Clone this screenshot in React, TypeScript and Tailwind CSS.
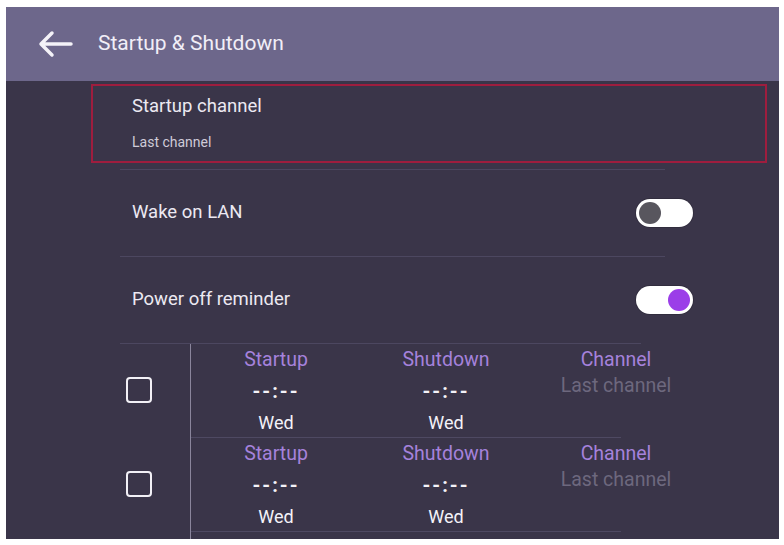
import React from "react";

const FONT = { fontFamily: "Roboto, 'Noto Sans', 'Liberation Sans', sans-serif" };

function BackArrow() {
  return (
    <svg width="36" height="28" viewBox="0 0 36 28" fill="none">
      <path
        d="M34 14H4M15 3L4 14l11 11"
        stroke="#f4f2f8"
        strokeWidth="3.5"
        strokeLinecap="round"
        strokeLinejoin="round"
      />
    </svg>
  );
}

function Toggle({ on }: { on: boolean }) {
  return (
    <div
      className={`flex h-[28px] w-[57px] items-center rounded-full bg-white px-[3px] shadow-[0_0_0_1px_rgba(0,0,0,0.15)] ${
        on ? "justify-end" : "justify-start"
      }`}
    >
      <div
        className={`h-[22px] w-[22px] rounded-full ${
          on ? "bg-[#9b3ee8]" : "bg-[#58565e]"
        }`}
      />
    </div>
  );
}

function Divider({ short }: { short?: boolean }) {
  return (
    <div
      className={`ml-[114px] h-px shrink-0 bg-[#4c4760] ${short ? "mr-[138px]" : "mr-[114px]"}`}
    />
  );
}

function SettingRow({ label, on }: { label: string; on: boolean }) {
  return (
    <div className="flex h-[86px] shrink-0 items-center justify-between pl-[126px] pr-[86px]">
      <span className="text-[18.5px] text-[#ece9f2]">{label}</span>
      <Toggle on={on} />
    </div>
  );
}

function ScheduleRow({ last }: { last?: boolean }) {
  return (
    <div className="flex h-[94px] shrink-0">
      <div className="flex w-[184px] shrink-0 items-center pl-[120px] pb-[2px]">
        <div className="h-[26px] w-[26px] rounded-[4px] border-[2.5px] border-[#f2f0f6]" />
      </div>
      <div className="flex flex-1 flex-col border-l border-[#8a859c]">
        <div className="flex h-[93px] shrink-0">
          {["Startup", "Shutdown"].map((t) => (
            <div key={t} className="flex w-[170px] shrink-0 flex-col items-center pt-[3px]">
              <span className="text-[19.5px] leading-[26px] text-[#a582dc]">{t}</span>
              <span className="mt-[6px] text-[20px] font-bold leading-[24px] tracking-[2px] text-[#f4f2f8]">
                --:--
              </span>
              <span className="mt-[8px] text-[18px] leading-[24px] text-[#f4f2f8]">Wed</span>
            </div>
          ))}
          <div className="flex w-[170px] shrink-0 flex-col items-center pt-[3px]">
            <span className="text-[19.5px] leading-[26px] text-[#a582dc]">Channel</span>
            <span className="mt-[1px] text-[19.5px] leading-[24px] text-[#6d687e]">Last channel</span>
          </div>
        </div>
        {!last && <div className="h-px w-[430px] shrink-0 bg-[#4e4962]" />}
      </div>
    </div>
  );
}

export default function App() {
  return (
    <div className="h-[545px] w-[784px] bg-white pl-[6px] pt-[7px]" style={FONT}>
      <div className="flex h-[532px] w-[773px] flex-col overflow-hidden bg-[#3a3549]">
        {/* title bar */}
        <div className="flex h-[74px] shrink-0 items-center bg-[#6d678b] pl-[31px]">
          <BackArrow />
          <span className="ml-[25px] text-[21px] text-[#f1eef7]">Startup &amp; Shutdown</span>
        </div>

        {/* highlighted item */}
        <div className="ml-[85px] mr-[12px] mt-[3px] flex h-[79px] shrink-0 flex-col border-2 border-[#9e1d3e] pl-[39px]">
          <span className="mt-[8px] text-[18.5px] leading-[24px] text-[#ece9f2]">Startup channel</span>
          <span className="mt-[15px] text-[14px] leading-[18px] text-[#cfcbd8]">Last channel</span>
        </div>

        <div className="mt-[6px] shrink-0">
          <Divider />
        </div>
        <SettingRow label="Wake on LAN" on={false} />
        <Divider />
        <SettingRow label="Power off reminder" on={true} />
        <Divider short />

        <ScheduleRow />
        <ScheduleRow />
        <ScheduleRow last />
      </div>
    </div>
  );
}
